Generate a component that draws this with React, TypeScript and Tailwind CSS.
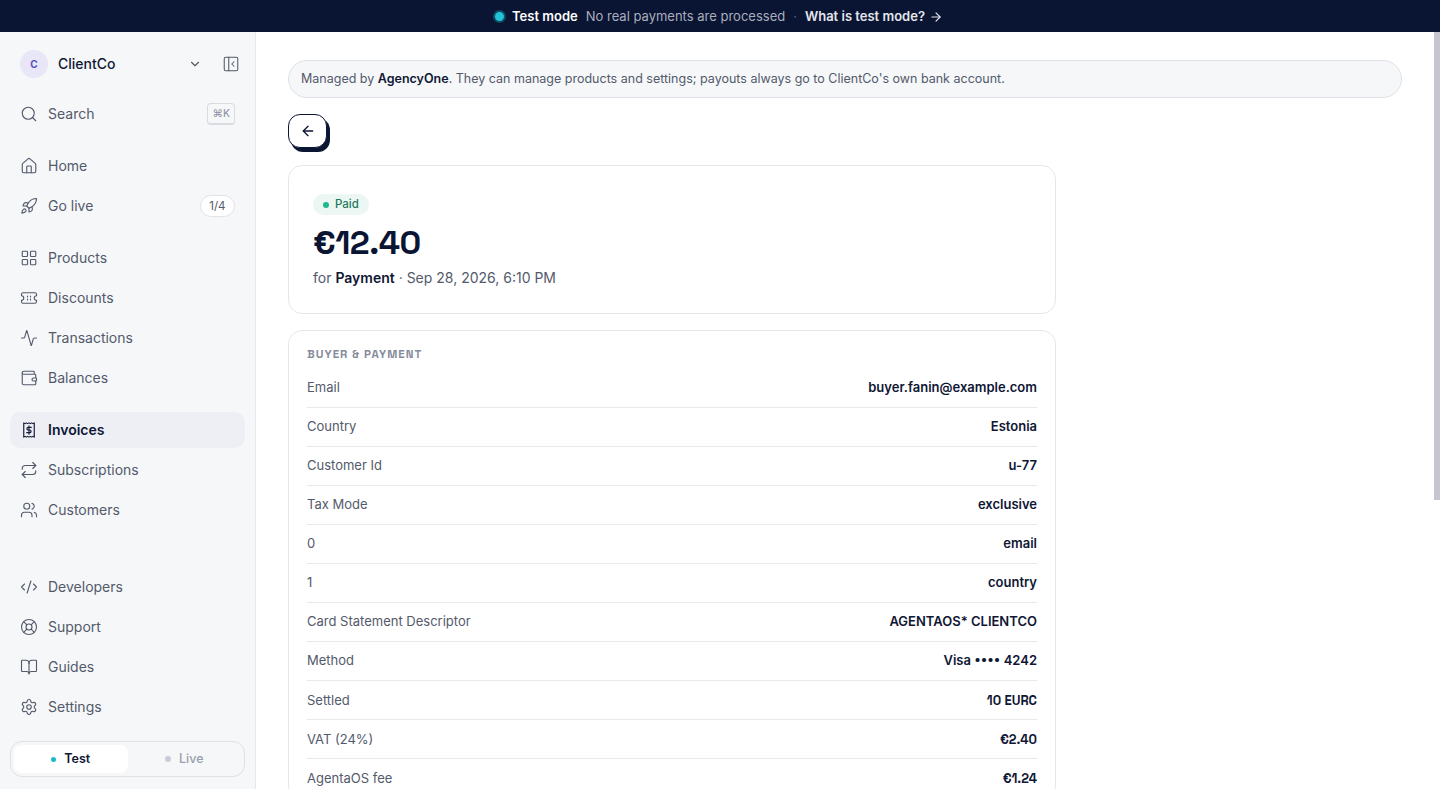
import { Search, House, Rocket, LayoutGrid, Activity, Wallet, Repeat, Users, CodeXml, LifeBuoy, BookOpen, Settings, ChevronDown, PanelLeftClose, ArrowLeft, ArrowRight } from "lucide-react";

const font = "font-['Inter',sans-serif]";
const num = "font-['Space_Grotesk','DejaVu_Sans',sans-serif]";

function Item({ icon: Icon, label, active, right }: any) {
  return (
    <div className={`flex h-9 items-center gap-2 rounded-[10px] px-2.5 text-[14px] ${active ? "bg-[#eeeff5] font-semibold text-[#0f1734]" : "text-[#535a6b]"}`}>
      {Icon && <Icon size={18} strokeWidth={1.5} className="mr-0.5 shrink-0" />}
      <span className="flex-1 pb-[2px]">{label}</span>
      {right}
    </div>
  );
}

function TicketIcon() {
  return (
    <svg width="18" height="18" viewBox="0 0 24 24" fill="none" stroke="currentColor" strokeWidth="1.5" strokeLinecap="round" strokeLinejoin="round" className="mr-0.5 shrink-0">
      <path d="M2 9a3 3 0 0 1 0 6v2a2 2 0 0 0 2 2h16a2 2 0 0 0 2-2v-2a3 3 0 0 1 0-6V7a2 2 0 0 0-2-2H4a2 2 0 0 0-2 2z" />
      <path d="M10 9.5v1M10 13.5v1M14 9.5v1M14 13.5v1" />
    </svg>
  );
}

function InvoiceIcon() {
  return (
    <svg width="18" height="18" viewBox="0 0 24 24" fill="none" stroke="currentColor" strokeWidth="1.5" strokeLinecap="round" strokeLinejoin="round" className="mr-0.5 shrink-0">
      <path d="M5 2.5l1.75 1 1.75-1 1.75 1 1.75-1 1.75 1 1.75-1 1.75 1 1.75-1v19l-1.75-1-1.75 1-1.75-1-1.75 1-1.75-1-1.75 1-1.75-1-1.75 1z" />
      <path d="M15 8.5h-4a1.75 1.75 0 0 0 0 3.5h2a1.75 1.75 0 0 1 0 3.5H9" />
      <path d="M12 6.5v11" />
    </svg>
  );
}

const rows: [string, string, boolean?][] = [
  ["Email", "buyer.fanin@example.com"],
  ["Country", "Estonia"],
  ["Customer Id", "u-77"],
  ["Tax Mode", "exclusive"],
  ["0", "email"],
  ["1", "country"],
  ["Card Statement Descriptor", "AGENTAOS* CLIENTCO"],
  ["Method", "Visa •••• 4242"],
  ["Settled", "10 EURC", true],
  ["VAT (24%)", "€2.40", true],
  ["AgentaOS fee", "€1.24", true],
];

export default function App() {
  return (
    <div className={`${font} flex h-screen flex-col overflow-hidden bg-white`}>
      <div className="flex h-8 shrink-0 items-center justify-center gap-2 bg-[#0a1433] pr-1 pt-px text-[13px]">
        <span className="-mr-0.5 h-[13px] w-[13px] rounded-full border-[2.5px] border-[#0e4d63] bg-[#22c3d8]" />
        <span className="font-semibold text-white">Test mode</span>
        <span className="text-[#a9aebd]">No real payments are processed</span>
        <span className="text-[#5d6478]">·</span>
        <span className="flex items-center gap-1 font-semibold text-[#e4e6ec]">What is test mode? <ArrowRight size={14} /></span>
      </div>
      <div className="flex min-h-0 flex-1">
        <aside className="flex w-[256px] shrink-0 flex-col border-r border-[#e6e7eb] bg-[#f6f7f9] px-2.5">
          <div className="flex h-[64px] items-center pl-2.5 pr-1">
            <span className="flex h-7 w-7 items-center justify-center rounded-full bg-[#e8e6f7] text-[10px] font-bold text-[#5a4fc4]">C</span>
            <span className="ml-2.5 flex-1 pb-[2px] text-[14px] font-medium text-[#0f1734]">ClientCo</span>
            <ChevronDown size={14} className="mr-[21px] text-[#535a6b]" />
            <PanelLeftClose size={18} strokeWidth={1.4} className="-translate-x-px text-[#535a6b]" />
          </div>
          <Item icon={Search} label="Search" right={<span className="rounded-[4px] border border-b-2 border-[#d9dbe1] px-1 py-[2px] text-[10.5px] leading-[15px] text-[#8a90a0]">⌘K</span>} />
          <div className="mt-[16px] flex flex-col gap-1">
            <Item icon={House} label="Home" />
            <Item icon={Rocket} label="Go live" right={<span className="rounded-full border border-[#e2e3e8] bg-white px-[8.5px] py-[2px] text-[11.5px] leading-[16px] text-[#535a6b]">1/4</span>} />
          </div>
          <div className="mt-4 flex flex-col gap-1">
            <Item icon={LayoutGrid} label="Products" />
            <div className="flex h-9 items-center gap-2 rounded-[10px] px-2.5 text-[14px] text-[#535a6b]">
              <TicketIcon />
              <span className="pb-[2px]">Discounts</span>
            </div>
            <Item icon={Activity} label="Transactions" />
            <Item icon={Wallet} label="Balances" />
          </div>
          <div className="mt-4 flex flex-col gap-1">
            <div className="flex h-9 items-center gap-2 rounded-[10px] bg-[#eeeff5] px-2.5 text-[14px] font-semibold text-[#0f1734]">
              <InvoiceIcon />
              <span className="pb-[2px]">Invoices</span>
            </div>
            <Item icon={Repeat} label="Subscriptions" />
            <Item icon={Users} label="Customers" />
          </div>
          <div className="mt-auto flex flex-col gap-1">
            <Item icon={CodeXml} label="Developers" />
            <Item icon={LifeBuoy} label="Support" />
            <Item icon={BookOpen} label="Guides" />
            <Item icon={Settings} label="Settings" />
          </div>
          <div className="mb-3 mt-[16px] flex h-9 items-center rounded-[12px] border border-[#dfe1e6] bg-[#f6f7f9] p-[3px] text-[12.5px]">
            <div className="flex h-full flex-1 items-center justify-center gap-2 rounded-[8px] bg-white font-semibold text-[#0f1734]">
              <span className="h-[5px] w-[5px] rounded-full bg-[#1cb9cc]" /> Test
            </div>
            <div className="flex h-full flex-1 items-center justify-center gap-2 font-medium text-[#9a9fae]">
              <span className="h-[6px] w-[6px] rounded-full bg-[#c9ccd6]" /> Live
            </div>
          </div>
        </aside>
        <main className="min-w-0 flex-1 overflow-hidden px-8 pt-7">
          <div className="flex h-[38px] w-full items-center rounded-[19px] border border-[#dfe1e6] bg-[#f6f7f9] px-3 text-[12.5px] text-[#535a6b]">
            <span>Managed by <b className="font-semibold text-[#0f1734]">AgencyOne</b>. They can manage products and settings; payouts always go to ClientCo's own bank account.</span>
          </div>
          <button className="mt-4 flex h-[34px] w-[39px] items-center justify-center rounded-[12px] border-[1.5px] border-[#0a1433] bg-white text-[#0a1433] shadow-[3px_4px_0_#0a1433]">
            <ArrowLeft size={16} />
          </button>
          <div className="mt-[17px] flex h-[149px] w-[768px] flex-col items-start rounded-[14px] border border-[#e6e7eb] bg-white px-6 pt-[28px]">
            <span className="flex h-[21px] items-center gap-1.5 rounded-full bg-[#ecf7f3] px-2.5 pt-px text-[11.5px] font-medium text-[#1d7a5c]">
              <span className="h-[6px] w-[6px] rounded-full bg-[#1cb98a]" /> Paid
            </span>
            <div className={`${num} mt-[9px] text-[33.5px] font-extrabold leading-[38px] tracking-[-0.5px] text-[#0a1433]`}>€12.40</div>
            <div className="mt-[5px] text-[14px] text-[#535a6b]">for <b className="font-semibold text-[#0f1734]">Payment</b> · Sep 28, 2026, 6:10 PM</div>
          </div>
          <div className="mb-8 mt-4 w-[768px] rounded-[14px] border border-[#e6e7eb] bg-white px-[18px] pt-4">
            <div className={`${num} mb-[7.5px] text-[11.5px] font-bold uppercase leading-[14px] tracking-[0.09em] text-[#858b9b]`}>Buyer &amp; payment</div>
            {rows.map(([k, v, n]) => (
              <div key={k} className="flex h-[39.1px] items-center justify-between border-b border-[#e8e9ed] text-[13px]">
                <span className="text-[#535a6b]">{k}</span>
                <span className={`font-semibold text-[#0f1734] ${n ? num : ""}`}>{v}</span>
              </div>
            ))}
          </div>
        </main>
        <div className="w-1.5 shrink-0 bg-white">
          <div className="h-[468px] w-full bg-[#c6c6cf]" />
        </div>
      </div>
    </div>
  );
}
